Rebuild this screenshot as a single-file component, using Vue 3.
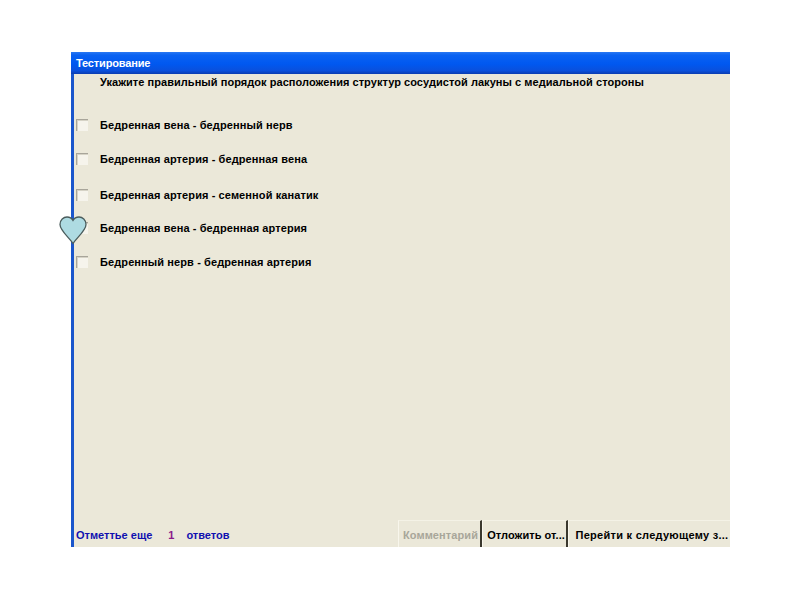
<script setup>
const options = [
  { text: 'Бедренная вена - бедренный нерв', cls: 'g0' },
  { text: 'Бедренная артерия - бедренная вена', cls: 'g14' },
  { text: 'Бедренная артерия - семенной канатик', cls: 'g16' },
  { text: 'Бедренная вена - бедренная артерия', cls: 'g13' },
  { text: 'Бедренный нерв - бедренная артерия', cls: 'g14' },
]
</script>

<template>
  <div class="page">
    <div class="window">
      <div class="titlebar">Тестирование</div>
      <div class="body">
        <div class="question">Укажите правильный порядок расположения структур сосудистой лакуны с медиальной стороны</div>
        <div class="options">
          <div v-for="o in options" :key="o.text" class="option" :class="o.cls">
            <span class="check"></span>
            <span class="label">{{ o.text }}</span>
          </div>
        </div>
        <div class="footer">
          <div class="status">
            <span>Отметтье еще</span>
            <span class="count">1</span>
            <span>ответов</span>
          </div>
          <div class="buttons">
            <div class="btn disabled">Комментарий</div>
            <div class="btn b2">Отложить от...</div>
            <div class="btn b3">Перейти к следующему з...</div>
          </div>
        </div>
      </div>
      <svg class="heart" width="30" height="30" viewBox="0 0 30 30">
        <path d="M15 28.5 C11 22.5 2 15.5 2 9.5 C2 5 5.5 2 9 2 C11.5 2 13.8 3.2 15 5.4 C16.2 3.2 18.5 2 21 2 C24.5 2 28 5 28 9.5 C28 15.5 19 22.5 15 28.5 Z" fill="#aedbe2" stroke="#4a5c5c" stroke-width="1.3" />
      </svg>
    </div>
  </div>
</template>

<style>
html, body { margin: 0; background: #fff; }
</style>

<style scoped>
.page {
  width: 800px;
  height: 600px;
  padding: 52px 70px 0 71px;
  box-sizing: border-box;
  font-family: "Liberation Sans", Arial, sans-serif;
  font-size: 11px;
  font-weight: bold;
  color: #000;
}
.window {
  position: relative;
  height: 495px;
  display: flex;
  flex-direction: column;
}
.titlebar {
  height: 22px;
  flex: none;
  box-sizing: border-box;
  padding: 5px 0 0 5px;
  line-height: 13px;
  letter-spacing: -0.15px;
  color: #fff;
  background: linear-gradient(#2a78f2 0, #0a62f2 14%, #0058f0 55%, #0a50dc 85%, #0a3cb0 100%);
}
.body {
  flex: 1;
  display: flex;
  flex-direction: column;
  background: #ebe8d9;
  border-left: 3px solid #1a56cc;
  min-height: 0;
}
.question {
  height: 41px;
  flex: none;
  box-sizing: border-box;
  padding: 2px 0 0 26px;
  line-height: 13px;
  letter-spacing: 0.05px;
}
.options { flex: 1; }
.option {
  display: flex;
  align-items: center;
  height: 20px;
  padding-left: 2px;
}
.g14 { margin-top: 14px; }
.g16 { margin-top: 16px; }
.g13 { margin-top: 13px; }
.check {
  width: 11px;
  height: 11px;
  flex: none;
  background: #f6f4ec;
  border-top: 1px solid #a8a59a;
  border-left: 1px solid #a8a59a;
  box-shadow: inset 1px 1px 0 #d6d3c6;
}
.label {
  margin-left: 12px;
  line-height: 13px;
  letter-spacing: 0.1px;
}
.footer {
  height: 27px;
  flex: none;
  display: flex;
  align-items: stretch;
  justify-content: space-between;
}
.status {
  display: flex;
  align-items: center;
  padding: 3px 0 0 2px;
  color: #1010b0;
}
.count {
  color: #8a1a8a;
  margin: 0 12px 0 16px;
}
.buttons { display: flex; }
.btn {
  display: flex;
  align-items: center;
  justify-content: center;
  border-right: 2px solid #3a382e;
  border-left: 1px solid #f8f6ec;
  border-top: 1px solid #f4f2e6;
  box-sizing: border-box;
  padding-top: 2px;
}
.disabled { width: 84px; color: #a8a69a; letter-spacing: 0.1px; padding-left: 2px; }
.b2 { width: 86px; letter-spacing: 0.05px; padding-left: 3px; }
.b3 { width: 162px; border-right: 0; letter-spacing: 0.27px; padding-left: 5px; }
.heart {
  position: absolute;
  left: -13px;
  top: 163px;
}
</style>
